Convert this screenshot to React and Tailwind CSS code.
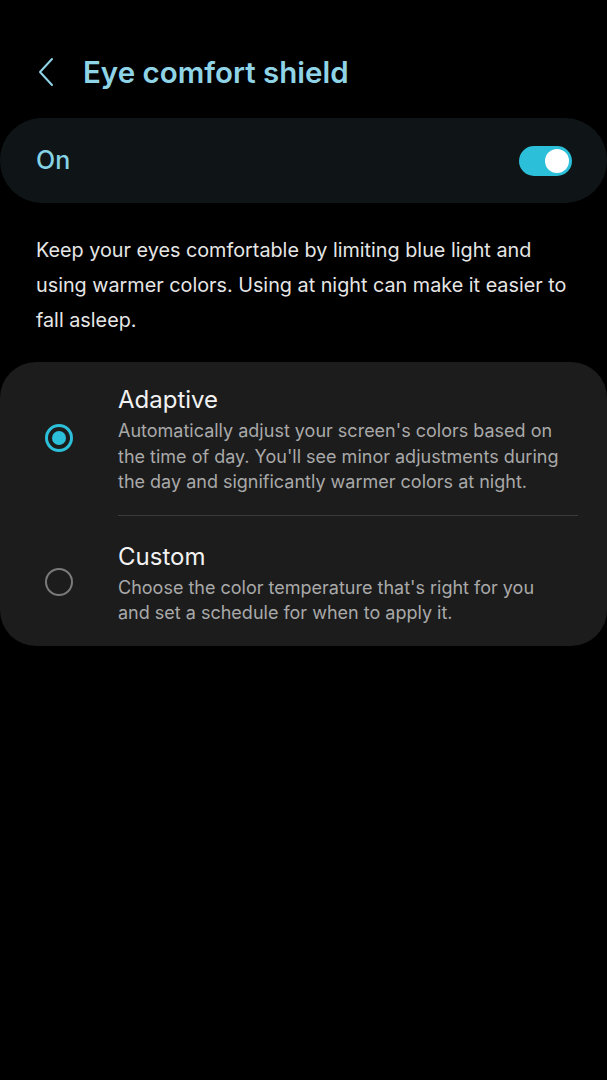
import React from 'react'

const font = { fontFamily: 'Inter, Roboto, "Noto Sans", sans-serif' }

function Radio({ checked }) {
  if (checked) {
    return (
      <div className="flex h-[28px] w-[28px] items-center justify-center rounded-full border-[3px] border-[#2cbfd9]">
        <div className="h-[14px] w-[14px] rounded-full bg-[#2cbfd9]" />
      </div>
    )
  }
  return <div className="h-[28px] w-[28px] rounded-full border-2 border-[#7a7a7a]" />
}

function Option({ checked, title, desc }) {
  return (
    <div className="flex items-center">
      <div className="flex w-[118px] shrink-0 justify-center">
        <Radio checked={checked} />
      </div>
      <div className="pr-[38px]">
        <div className="text-[24px] leading-[36px] text-[#f2f2f2]">{title}</div>
        <div className="text-[18px] leading-[25.5px] text-[#a9a9a9]">{desc}</div>
      </div>
    </div>
  )
}

export default function App() {
  return (
    <div className="min-h-[1080px] w-[607px] bg-black" style={font}>
      <div className="flex h-[118px] items-center pl-[36px] pt-[26px]">
        <svg width="20" height="30" viewBox="0 0 20 30" className="mr-[27px]">
          <path d="M16 2 L4 15 L16 28" fill="none" stroke="#8fd4e6" strokeWidth="2" strokeLinecap="round" strokeLinejoin="round" />
        </svg>
        <h1 className="text-[29.5px] font-semibold text-[#8fd4e6]">Eye comfort shield</h1>
      </div>

      <div className="flex h-[85px] items-center justify-between rounded-[42px] bg-[#0f1517] pl-[36px] pr-[35px]">
        <span className="text-[25px] font-medium text-[#85d3e4]">On</span>
        <div className="flex h-[30px] w-[53px] items-center justify-end rounded-full bg-[#2cbfd9] pr-[3px]">
          <div className="h-[24px] w-[24px] rounded-full bg-white" />
        </div>
      </div>

      <p className="px-[36px] pt-[30px] pb-[24px] text-[19.8px] leading-[35px] text-[#e6e6e6]">
        Keep your eyes comfortable by limiting blue light and using warmer colors. Using at night can make it easier to fall asleep.
      </p>

      <div className="rounded-[36px] bg-[#1c1c1c] pt-[20px] pb-[20px]">
        <Option
          checked
          title="Adaptive"
          desc="Automatically adjust your screen's colors based on the time of day. You'll see minor adjustments during the day and significantly warmer colors at night."
        />
        <div className="ml-[118px] mr-[29px] mt-[20px] mb-[23px] h-px bg-[#3c3c3c]" />
        <Option
          title="Custom"
          desc="Choose the color temperature that's right for you and set a schedule for when to apply it."
        />
      </div>
    </div>
  )
}
